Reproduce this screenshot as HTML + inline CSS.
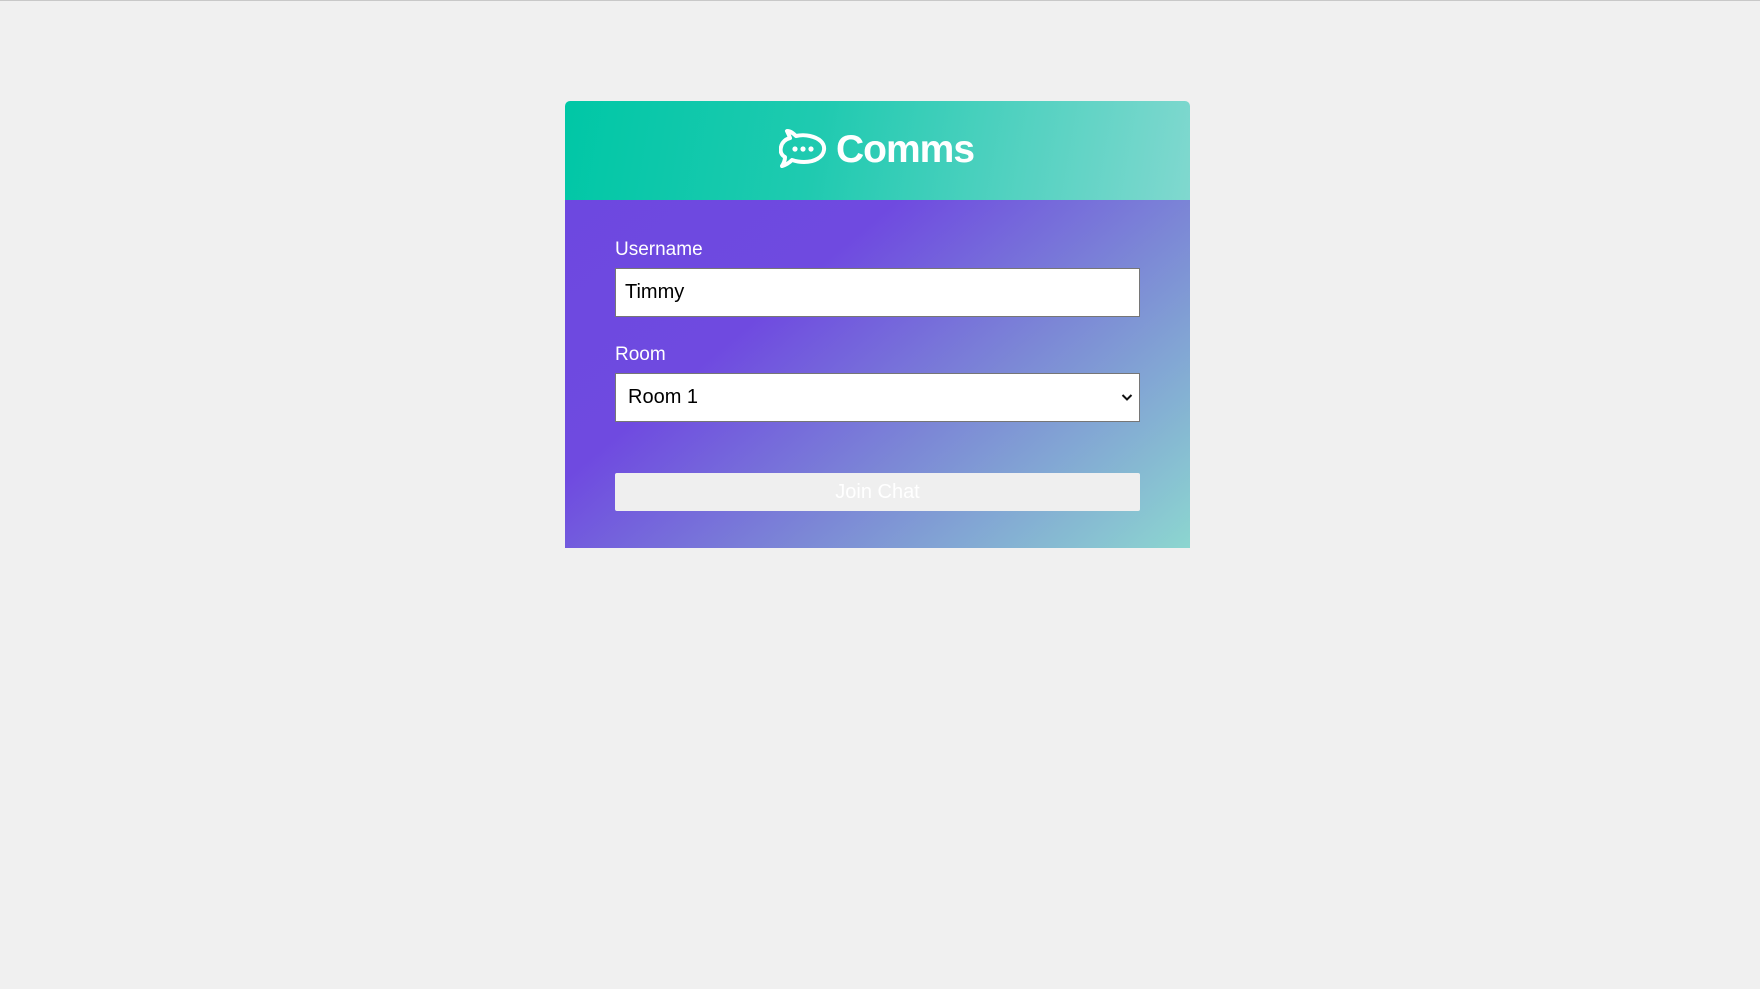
<!DOCTYPE html>
<html><head><meta charset="utf-8"><style>
html,body{margin:0;padding:0;}
body{width:1760px;height:989px;background:#f0f0f0;border-top:1px solid #c8c8c8;box-sizing:border-box;font-family:"Liberation Sans",Arial,sans-serif;position:relative;overflow:hidden;}
.card{position:absolute;left:565px;top:100px;width:625px;height:447px;border-radius:5px 5px 0 0;overflow:hidden;}
.hd{height:99px;background:linear-gradient(100deg,#00c7a6 0%,#1fcab0 40%,#80d8cf 100%);position:relative;}
.hd .t{position:absolute;left:271px;top:27px;color:#fff;font-size:39px;font-weight:bold;letter-spacing:-1px;}
.hd svg{position:absolute;left:214px;top:28px;}
.bd{height:348px;background:linear-gradient(140deg,#6d48e0 0%,#6f4ae0 32%,#7c88d6 62%,#8cd6d0 100%);position:relative;}
label{position:absolute;left:50px;color:#fff;font-size:19px;}
.in{position:absolute;left:50px;width:523px;height:47px;background:#fff;border:1px solid #767676;font-size:20px;color:#000;line-height:47px;box-sizing:content-box;}
.btn{position:absolute;left:50px;width:525px;height:38px;top:273px;background:#efefef;border-radius:2px;color:#fff;font-size:20px;text-align:center;line-height:38px;}
</style></head><body>
<div class="card">
 <div class="hd">
  <svg width="48" height="42" viewBox="0 0 48 42"><path d="M8 2 C12 2 15 5 17 7 C21 6 27 6 31 7 C40 9 46 14 45 21 C44 28 36 33 25 33 C20 33 16 32 13 31 C10 34 7 36 3 37 C5 34 6 31 6 28 C2 26 1 22 2 18 C3 13 7 10 11 9 C10 6 9 4 8 2 Z" fill="none" stroke="#fff" stroke-width="4" stroke-linejoin="round"/><circle cx="16" cy="20" r="2.6" fill="#fff"/><circle cx="24" cy="20" r="2.6" fill="#fff"/><circle cx="32" cy="20" r="2.6" fill="#fff"/></svg>
  <div class="t">Comms</div>
 </div>
 <div class="bd">
  <label style="top:39px">Username</label>
  <div class="in" style="top:68px;padding-left:9px;width:514px">Timmy</div>
  <label style="top:144px">Room</label>
  <div class="in" style="top:173px;padding-left:12px;width:511px">Room 1<svg style="position:absolute;right:6px;top:19px" width="12" height="9" viewBox="0 0 12 9"><path d="M1.5 2 L6 6.5 L10.5 2" fill="none" stroke="#111" stroke-width="2"/></svg></div>
  <div class="btn">Join Chat</div>
 </div>
</div>
</body></html>
